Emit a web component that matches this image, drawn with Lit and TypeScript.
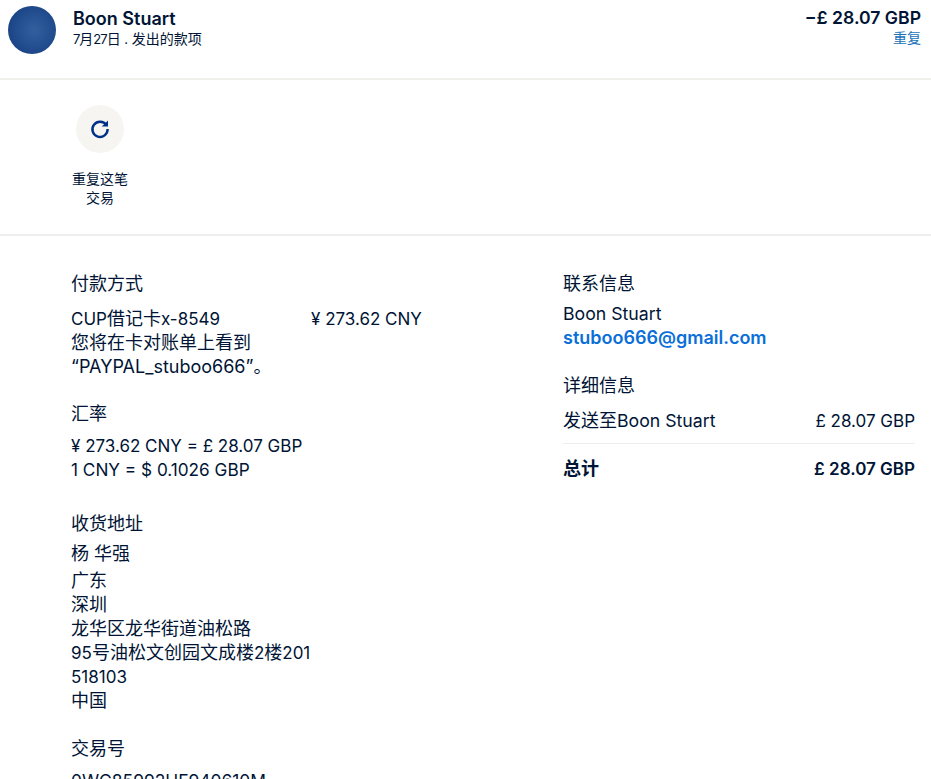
import { LitElement, html, css } from "lit";
import { customElement } from "lit/decorators.js";

@customElement("app-root")
export class AppRoot extends LitElement {
  static styles = css`
    :host {
      display: block;
      height: 779px;
      overflow: hidden;
      background: #fff;
      color: #001435;
      font-family: Inter, "Noto Sans CJK SC", sans-serif;
      font-size: 17px;
      line-height: 24px;
    }

    /* chinese runs sit a pixel larger than the latin around them */
    .c {
      font-size: 18px;
    }

    .header {
      display: flex;
      align-items: flex-start;
      height: 72px;
      padding: 6px 10px 0 8px;
      border-bottom: 2px solid #f1efea;
    }

    .avatar {
      width: 48px;
      height: 48px;
      border-radius: 50%;
      background: radial-gradient(circle at 55% 50%, #32609f, #123a7e);
      margin-right: 17px;
    }

    .who {
      flex: 1;
    }

    .name {
      font-size: 18px;
      font-weight: 600;
      line-height: 24px;
      margin-top: 1px;
    }

    .sub {
      font-size: 13px;
      line-height: 16px;
    }

    .sub .c,
    .repeat,
    .action {
      font-size: 14px;
    }

    .tight {
      letter-spacing: -1px;
    }

    .amount {
      text-align: right;
      line-height: 24px;
      font-weight: 600;
      font-size: 17.6px;
    }

    .repeat {
      font-weight: 400;
      line-height: 16px;
      color: #1a73b8;
    }

    .actions {
      height: 154px;
      border-bottom: 2px solid #eeeeee;
      padding-left: 72px;
    }

    .action {
      width: 56px;
      padding-top: 25px;
      text-align: center;
      line-height: 19px;
    }

    .circle {
      width: 48px;
      height: 48px;
      margin: 0 auto 16px;
      border-radius: 50%;
      background: #f6f5f1;
      display: flex;
      align-items: center;
      justify-content: center;
    }

    .details {
      display: grid;
      grid-template-columns: 352px 352px;
      column-gap: 140px;
      padding: 36px 16px 0 71px;
    }

    .heading {
      font-size: 18px;
      line-height: 24px;
      margin-bottom: 6px;
    }

    .heading.wide {
      margin-bottom: 11px;
    }

    .heading.mid {
      margin-bottom: 8px;
    }

    .group {
      margin-bottom: 24px;
    }

    .group.first {
      margin-bottom: 23px;
    }

    .group.loose {
      margin-bottom: 30px;
    }

    .row {
      display: flex;
      justify-content: space-between;
    }

    .method {
      width: 240px;
    }

    .charge {
      flex: 1;
    }

    .person {
      font-size: 17.7px;
    }

    .rate {
      font-size: 17.2px;
    }

    .txn {
      font-size: 17.4px;
    }

    .link {
      color: #0a6fd8;
      font-size: 18px;
      font-weight: 600;
    }

    .divider {
      height: 1px;
      background: #eeeeee;
      margin: 10px 0 13px;
    }

    .total {
      font-weight: 600;
    }

    .address-name {
      margin-bottom: 3px;
    }
  `;

  render() {
    return html`
      <div class="header">
        <div class="avatar"></div>
        <div class="who">
          <div class="name">Boon Stuart</div>
          <div class="sub">
            <span class="tight">7</span><span class="c">月</span><span class="tight">27</span><span class="c">日</span>
            . <span class="c">发出的款项</span>
          </div>
        </div>
        <div class="amount">
          <div>−£ 28.07 GBP</div>
          <div class="repeat">重复</div>
        </div>
      </div>
      <div class="actions">
        <div class="action">
          <div class="circle">
            <svg width="24" height="24" viewBox="0 0 24 24" fill="none">
              <path d="M18.4 8.2A7.6 7.6 0 1 0 19.6 12" stroke="#003087" stroke-width="2.4" />
              <path d="M20 3.4V9.6H13.8Z" fill="#003087" />
            </svg>
          </div>
          重复这笔<br />交易
        </div>
      </div>
      <div class="details">
        <div>
          <div class="group first">
            <div class="heading wide">付款方式</div>
            <div class="row">
              <div class="method">CUP<span class="c">借记卡</span>x-8549</div>
              <div class="charge">¥ 273.62 CNY</div>
            </div>
            <div class="c">您将在卡对账单上看到</div>
            <div class="c">“PAYPAL_stuboo666”。</div>
          </div>
          <div class="group loose">
            <div class="heading mid">汇率</div>
            <div>¥ 273.62 CNY = £ 28.07 GBP</div>
            <div class="rate">1 CNY = $ 0.1026 GBP</div>
          </div>
          <div class="group">
            <div class="heading">收货地址</div>
            <div class="address-name c">杨 华强</div>
            <div class="c">广东</div>
            <div class="c">深圳</div>
            <div class="c">龙华区龙华街道油松路</div>
            <div>95<span class="c">号油松文创园文成楼</span>2<span class="c">楼</span>201</div>
            <div>518103</div>
            <div class="c">中国</div>
          </div>
          <div class="group">
            <div class="heading mid">交易号</div>
            <div class="txn">0WC85992HF940610M</div>
          </div>
        </div>
        <div>
          <div class="group">
            <div class="heading">联系信息</div>
            <div class="person">Boon Stuart</div>
            <div class="link">stuboo666@gmail.com</div>
          </div>
          <div class="group">
            <div class="heading wide">详细信息</div>
            <div class="row">
              <span><span class="c">发送至</span><span class="person">Boon Stuart</span></span>
              <span>£ 28.07 GBP</span>
            </div>
            <div class="divider"></div>
            <div class="row total">
              <span class="c">总计</span>
              <span>£ 28.07 GBP</span>
            </div>
          </div>
        </div>
      </div>
    `;
  }
}
